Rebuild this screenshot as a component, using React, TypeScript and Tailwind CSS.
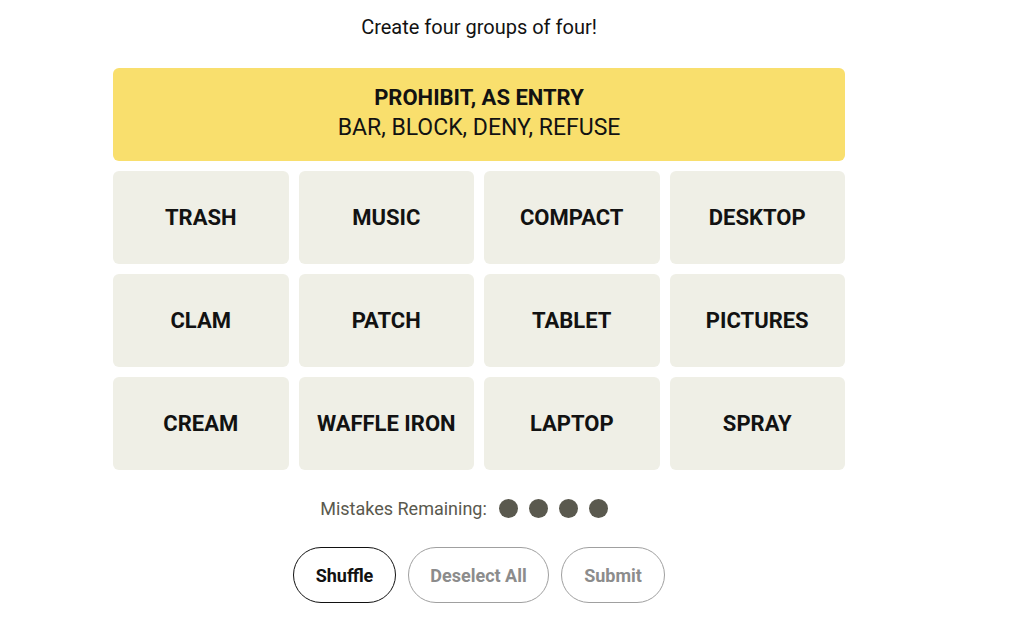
import { useState } from 'react'

const words = [
  'TRASH', 'MUSIC', 'COMPACT', 'DESKTOP',
  'CLAM', 'PATCH', 'TABLET', 'PICTURES',
  'CREAM', 'WAFFLE IRON', 'LAPTOP', 'SPRAY',
]

export default function App() {
  const [selected, setSelected] = useState<string[]>([])

  const toggle = (w: string) => {
    setSelected((s) => (s.includes(w) ? s.filter((x) => x !== w) : s.length < 4 ? [...s, w] : s))
  }

  return (
    <div className="w-[958px] bg-white pt-[15px] flex flex-col items-center text-[#121212] font-['Roboto',sans-serif]">
      <p className="text-[20px] leading-6">Create four groups of four!</p>

      <div className="mt-[29px] w-[732px] flex flex-col gap-[10px]">
        {/* Solved group */}
        <div className="h-[93px] rounded-md bg-[#f9df6d] flex flex-col items-center justify-center">
          <div className="text-[22px] font-bold leading-[26px] -mt-[3px]">PROHIBIT, AS ENTRY</div>
          <div className="text-[23px] leading-[26px] mt-[4px]">BAR, BLOCK, DENY, REFUSE</div>
        </div>

        {/* Tiles */}
        <div className="grid grid-cols-4 gap-x-[10px] gap-y-[10px]">
          {words.map((w) => (
            <button
              key={w}
              onClick={() => toggle(w)}
              className={
                selected.includes(w)
                  ? 'h-[93px] rounded-md bg-[#5a594e] text-white text-[22px] font-bold'
                  : 'h-[93px] rounded-md bg-[#efefe6] text-[#121212] text-[22px] font-bold'
              }
            >
              {w}
            </button>
          ))}
        </div>
      </div>

      {/* Mistakes */}
      <div className="mt-[25px] flex items-center gap-[12px] text-[18px] text-[#5a594e] -translate-x-[15px]">
        <span>Mistakes Remaining:</span>
        <div className="flex gap-[11px]">
          {[0, 1, 2, 3].map((i) => (
            <span key={i} className="w-[19px] h-[19px] rounded-full bg-[#5a594e]" />
          ))}
        </div>
      </div>

      {/* Actions */}
      <div className="mt-[25px] flex gap-[12px]">
        <button className="w-[103px] h-[56px] rounded-full border border-[#121212] text-[18px] font-bold text-[#121212]">
          Shuffle
        </button>
        <button className="w-[141px] h-[56px] rounded-full border border-[#a0a0a0] text-[18px] font-bold text-[#8c8c8c]">
          Deselect All
        </button>
        <button className="w-[104px] h-[56px] rounded-full border border-[#a0a0a0] text-[18px] font-bold text-[#8c8c8c]">
          Submit
        </button>
      </div>
    </div>
  )
}
